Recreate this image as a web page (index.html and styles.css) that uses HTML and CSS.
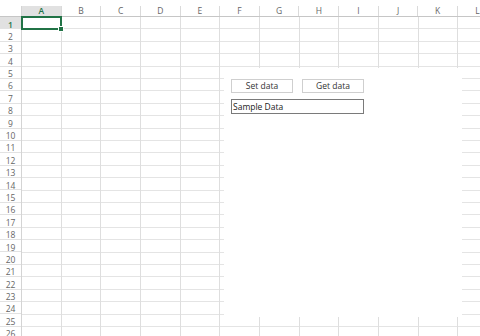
FILE: index.html
```html
<!DOCTYPE html>
<html>
<head>
<meta charset="utf-8">
<link rel="stylesheet" href="styles.css">
</head>
<body>
<div class="sheet">
  <div class="corner"></div>
  <div class="colhead">
    <div class="ch sel">A</div><div class="ch">B</div><div class="ch">C</div><div class="ch">D</div>
    <div class="ch">E</div><div class="ch">F</div><div class="ch">G</div><div class="ch">H</div>
    <div class="ch">I</div><div class="ch">J</div><div class="ch">K</div><div class="ch">L</div>
  </div>
  <div class="rowhead">
    <div class="rh sel">1</div><div class="rh">2</div><div class="rh">3</div><div class="rh">4</div>
    <div class="rh">5</div><div class="rh">6</div><div class="rh">7</div><div class="rh">8</div>
    <div class="rh">9</div><div class="rh">10</div><div class="rh">11</div><div class="rh">12</div>
    <div class="rh">13</div><div class="rh">14</div><div class="rh">15</div><div class="rh">16</div>
    <div class="rh">17</div><div class="rh">18</div><div class="rh">19</div><div class="rh">20</div>
    <div class="rh">21</div><div class="rh">22</div><div class="rh">23</div><div class="rh">24</div>
    <div class="rh">25</div><div class="rh">26</div>
  </div>
  <div class="cells">
    <div class="selection"><span class="handle"></span></div>
    <div class="pane">
      <div class="btnrow">
        <button class="btn">Set data</button>
        <button class="btn">Get data</button>
      </div>
      <div class="field">Sample Data</div>
    </div>
  </div>
</div>
</body>
</html>
```
FILE: styles.css
```css
html, body {
  margin: 0;
  padding: 0;
  background: #ffffff;
}
.sheet {
  width: 480px;
  height: 336px;
  overflow: hidden;
  display: grid;
  grid-template-columns: 22px 1fr;
  grid-template-rows: 17px 1fr;
  font-family: "Open Sans", "Noto Sans", sans-serif;
  color: #555;
}
.corner {
  border-bottom: 1px solid #c6c6c6;
  border-right: 1px solid #d4d4d4;
  box-sizing: border-box;
  margin-top: 6px;
}
.colhead {
  display: flex;
  padding-top: 6px;
  border-bottom: 1px solid #c6c6c6;
  box-sizing: border-box;
}
.ch {
  flex: 0 0 39.65px;
  box-sizing: border-box;
  border-right: 1px solid #dadada;
  font-size: 8.5px;
  line-height: 10px;
  text-align: center;
  color: #666;
}
.ch.sel {
  background: #e1e1e1;
  color: #217346;
  font-weight: 600;
}
.rowhead {
  display: flex;
  flex-direction: column;
  border-right: 1px solid #d4d4d4;
}
.rh {
  flex: none;
  height: 12.4px;
  min-height: 0;
  overflow: hidden;
  box-sizing: border-box;
  border-bottom: 1px solid #e2e2e2;
  font-size: 8.5px;
  line-height: 12.4px;
  padding-top: 1.5px;
  text-align: center;
  color: #666;
}
.rh.sel {
  background: #e1e1e1;
  color: #217346;
  font-weight: 600;
}
.cells {
  position: relative;
  background-image:
    repeating-linear-gradient(to right, transparent 0 38.65px, #dedede 38.65px 39.65px),
    repeating-linear-gradient(to bottom, transparent 0 11.4px, #e4e4e4 11.4px 12.4px);
}
.selection {
  position: absolute;
  left: -1px;
  top: -1px;
  width: 41px;
  height: 14px;
  border: 2px solid #217346;
  box-sizing: border-box;
}
.handle {
  position: absolute;
  right: -3px;
  bottom: -3px;
  width: 4px;
  height: 4px;
  background: #217346;
  border: 1px solid #fff;
  box-sizing: content-box;
  margin: -1px;
}
.pane {
  position: absolute;
  left: 202px;
  top: 51px;
  width: 238px;
  height: 249px;
  background: #ffffff;
  padding: 11px 0 0 7px;
  box-sizing: border-box;
  display: flex;
  flex-direction: column;
  gap: 6px;
}
.btnrow {
  display: flex;
  gap: 9px;
}
.btn {
  width: 62px;
  height: 14px;
  padding: 0;
  margin: 0;
  background: #ffffff;
  border: 1px solid #cfcfcf;
  font-family: "Open Sans", "Noto Sans", sans-serif;
  font-size: 8.5px;
  line-height: 12px;
  color: #333;
  text-align: center;
}
.field {
  width: 133px;
  height: 15px;
  box-sizing: border-box;
  border: 1px solid #7a7a7a;
  font-size: 8.5px;
  line-height: 13px;
  padding-left: 1px;
  color: #222;
}
```
